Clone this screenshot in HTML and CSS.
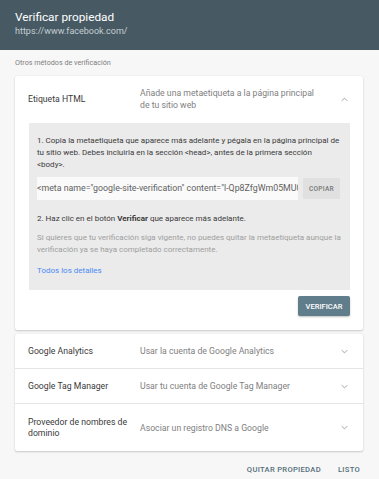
FILE: index.html
```html
<!DOCTYPE html>
<html lang="es">
<head>
    <meta charset="UTF-8">
    <meta name="viewport" content="width=device-width, initial-scale=1.0">
    <title>Verificar propiedad</title>
    <link rel="stylesheet" href="styles.css">
</head>
<body>
    <div class="dialog">
        <header class="dialog-header">
            <h1>Verificar propiedad</h1>
            <div class="property-url">https://www.facebook.com/</div>
        </header>

        <div class="dialog-body">
            <div class="section-label">Otros métodos de verificación</div>

            <!-- Expanded method -->
            <div class="method-card">
                <div class="method-row">
                    <div class="method-name">Etiqueta HTML</div>
                    <div class="method-desc">Añade una metaetiqueta a la página principal de tu sitio web</div>
                    <svg class="chevron" viewBox="0 0 10 6"><path d="M1 5 L5 1 L9 5"/></svg>
                </div>
                <div class="method-panel">
                    <p class="step">1. Copia la metaetiqueta que aparece más adelante y pégala en la página principal de tu sitio web. Debes incluirla en la sección &lt;head&gt;, antes de la primera sección &lt;body&gt;.</p>
                    <div class="copy-row">
                        <div class="meta-input">&lt;meta name="google-site-verification" content="l-Qp8ZfgWm05MU0kZ3nV" /&gt;</div>
                        <button class="copy-btn">COPIAR</button>
                    </div>
                    <p class="step">2. Haz clic en el botón <b>Verificar</b> que aparece más adelante.</p>
                    <p class="note">Si quieres que tu verificación siga vigente, no puedes quitar la metaetiqueta aunque la verificación ya se haya completado correctamente.</p>
                    <a href="#" class="details-link">Todos los detalles</a>
                </div>
                <div class="verify-row">
                    <button class="verify-btn">VERIFICAR</button>
                </div>
            </div>

            <!-- Collapsed methods -->
            <div class="method-card">
                <div class="method-row small">
                    <div class="method-name">Google Analytics</div>
                    <div class="method-desc">Usar la cuenta de Google Analytics</div>
                    <svg class="chevron" viewBox="0 0 10 6"><path d="M1 1 L5 5 L9 1"/></svg>
                </div>
                <div class="method-row small">
                    <div class="method-name">Google Tag Manager</div>
                    <div class="method-desc">Usar tu cuenta de Google Tag Manager</div>
                    <svg class="chevron" viewBox="0 0 10 6"><path d="M1 1 L5 5 L9 1"/></svg>
                </div>
                <div class="method-row tall">
                    <div class="method-name">Proveedor de nombres de dominio</div>
                    <div class="method-desc">Asociar un registro DNS a Google</div>
                    <svg class="chevron" viewBox="0 0 10 6"><path d="M1 1 L5 5 L9 1"/></svg>
                </div>
            </div>
        </div>

        <footer class="dialog-footer">
            <button class="text-btn">QUITAR PROPIEDAD</button>
            <button class="text-btn">LISTO</button>
        </footer>
    </div>
</body>
</html>
```

FILE: styles.css
```css
:root {
    --header-color: #475a64;
    --page-color: #f7f7f7;
    --panel-color: #ebebeb;
    --text-color: #3a3a3a;
    --muted-color: #808080;
    --button-color: #607d8b;
    --link-color: #4a8af4;
}

body {
    margin: 0;
    font-family: Roboto, "Liberation Sans", sans-serif;
    background-color: var(--page-color);
    color: var(--text-color);
}

.dialog {
    width: 379px;
    height: 479px;
    display: flex;
    flex-direction: column;
    overflow: hidden;
}

.dialog-header {
    background-color: var(--header-color);
    height: 50px;
    padding: 10px 15px 0;
    box-sizing: border-box;
    flex-shrink: 0;
}

.dialog-header h1 {
    margin: 0;
    font-size: 11.8px;
    font-weight: 400;
    color: #fff;
    line-height: 15px;
}

.property-url {
    font-size: 9px;
    color: #c4cdd2;
    line-height: 12px;
}

.dialog-body {
    padding: 0 16px 0 15px;
    flex: 1;
}

.section-label {
    font-size: 7.2px;
    color: var(--muted-color);
    height: 26px;
    line-height: 25px;
}

.method-card {
    background-color: #fff;
    box-shadow: 0 1px 2px rgba(0,0,0,0.18), 0 0 1px rgba(0,0,0,0.12);
    border-radius: 2px;
    margin-bottom: 4px;
}

.method-row {
    display: flex;
    align-items: center;
    height: 46px;
    padding: 0 15px 0 13px;
    font-size: 8.7px;
}

.method-row.small {
    height: 34px;
    border-bottom: 1px solid #e5e5e5;
}

.method-row.tall {
    height: 47px;
}

.method-name {
    width: 112px;
    flex-shrink: 0;
    line-height: 11px;
    color: var(--text-color);
}

.method-desc {
    flex: 1;
    color: var(--muted-color);
    line-height: 12px;
    padding-right: 16px;
}

.chevron {
    width: 7px;
    height: 5px;
    fill: none;
    stroke: #888;
    stroke-width: 1.1;
}

.method-panel {
    background-color: var(--panel-color);
    margin: 1px 13px 0 14px;
    padding: 12px 9px 13px 8px;
}

.step {
    margin: 0;
    font-size: 8px;
    line-height: 12px;
    color: var(--text-color);
}

.copy-row {
    display: flex;
    align-items: center;
    margin: 6px 0 13px;
}

.meta-input {
    width: 261px;
    height: 23px;
    line-height: 23px;
    background-color: #fafafa;
    font-size: 8.8px;
    color: #616161;
    white-space: nowrap;
    overflow: hidden;
}

.copy-btn {
    margin-left: 5px;
    width: 37px;
    height: 21px;
    border: none;
    border-radius: 1px;
    background-color: #e0e0e0;
    color: #757575;
    font-family: inherit;
    font-size: 6.5px;
    font-weight: 500;
    letter-spacing: 0.3px;
    padding: 0;
}

.note {
    margin: 7px 0 9px;
    font-size: 8px;
    line-height: 12px;
    color: #9e9e9e;
}

.details-link {
    display: block;
    font-size: 8px;
    line-height: 12px;
    color: var(--link-color);
    text-decoration: none;
}

.verify-row {
    display: flex;
    justify-content: flex-end;
    padding: 6px 13px 14px;
}

.verify-btn {
    width: 52px;
    height: 20px;
    border: none;
    border-radius: 2px;
    background-color: var(--button-color);
    color: #fff;
    font-family: inherit;
    font-size: 7.5px;
    font-weight: 500;
    padding: 0;
    box-shadow: 0 1px 2px rgba(0,0,0,0.25);
}

.dialog-footer {
    height: 28px;
    display: flex;
    justify-content: flex-end;
    align-items: center;
    gap: 17px;
    padding-right: 19px;
    flex-shrink: 0;
}

.text-btn {
    background: none;
    border: none;
    padding: 0;
    font-family: inherit;
    font-size: 7.6px;
    font-weight: 500;
    color: #546e7a;
    letter-spacing: 0.3px;
}
```
